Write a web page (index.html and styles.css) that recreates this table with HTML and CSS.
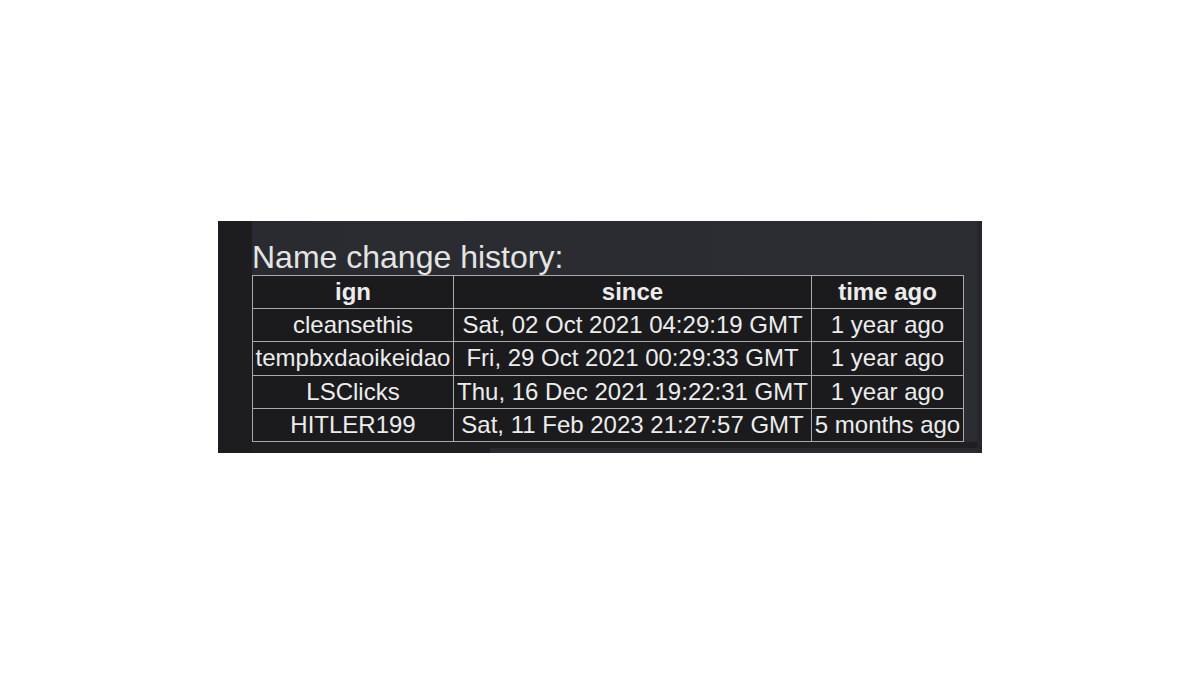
FILE: index.html
```html
<!DOCTYPE html>
<html>
<head>
<meta charset="utf-8">
<link rel="stylesheet" href="styles.css">
</head>
<body>
<div class="frame">
  <div class="side"></div>
  <div class="main">
    <div class="content">
      <h2 class="title">Name change history:</h2>
      <table class="history">
        <colgroup>
          <col class="c-ign">
          <col class="c-since">
          <col class="c-ago">
        </colgroup>
        <thead>
          <tr><th>ign</th><th>since</th><th>time ago</th></tr>
        </thead>
        <tbody>
          <tr><td>cleansethis</td><td>Sat, 02 Oct 2021 04:29:19 GMT</td><td>1 year ago</td></tr>
          <tr><td>tempbxdaoikeidao</td><td>Fri, 29 Oct 2021 00:29:33 GMT</td><td>1 year ago</td></tr>
          <tr><td>LSClicks</td><td>Thu, 16 Dec 2021 19:22:31 GMT</td><td>1 year ago</td></tr>
          <tr><td>HITLER199</td><td>Sat, 11 Feb 2023 21:27:57 GMT</td><td>5 months ago</td></tr>
        </tbody>
      </table>
    </div>
    <div class="bottom"><div class="bottom-gap"></div><div class="bottom-bar"></div></div>
  </div>
  <div class="edge"></div>
</div>
</body>
</html>
```

FILE: styles.css
```css
html, body {
  margin: 0;
  padding: 0;
  background: #ffffff;
}

body {
  font-family: "Liberation Sans", Arial, sans-serif;
}

.frame {
  margin: 221px 0 0 218px;
  width: 764px;
  height: 232px;
  display: flex;
  background: #1d1d20;
}

.side {
  width: 34px;
  flex: none;
  background: #1d1d20;
}

.main {
  flex: 1;
  display: flex;
  flex-direction: column;
  background: linear-gradient(90deg, #2a2b30 0%, #2c2d33 100%);
}

.content {
  flex: 1;
  padding-top: 18px;
}

.title {
  margin: 0;
  font-size: 32px;
  font-weight: normal;
  line-height: 36px;
  color: #e4e4e4;
}

.history {
  border-collapse: collapse;
  table-layout: fixed;
  width: 711px;
  color: #ececec;
  font-size: 24px;
}

.c-ign { width: 201px; }
.c-since { width: 358px; }
.c-ago { width: 152px; }

.history th,
.history td {
  border: 1px solid #a9a9ab;
  background: #1b1b1e;
  padding: 2px 0;
  line-height: 28.2px;
  text-align: center;
  white-space: nowrap;
  overflow: hidden;
}

.history th {
  font-weight: bold;
}

.bottom {
  height: 11px;
  display: flex;
  flex-direction: column;
  background: #1f1f22;
}

.bottom-gap {
  flex: 1;
}

.bottom-bar {
  height: 5px;
  margin-left: 238px;
  background: #2a2b2f;
}

.edge {
  width: 5px;
  flex: none;
  background: #26272b;
}
```
